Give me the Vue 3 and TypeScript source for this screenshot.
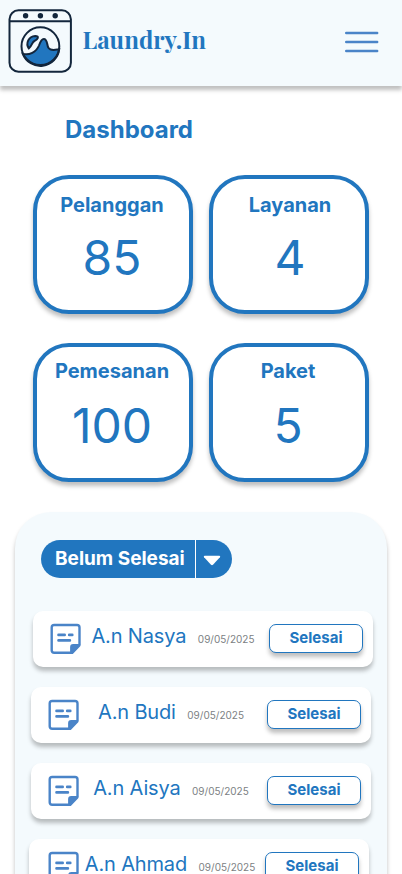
<script setup lang="ts">
interface Stat {
  label: string
  value: number
}

interface Order {
  name: string
  date: string
  indent: number
  iconGap: number
}

const stats: Stat[] = [
  { label: 'Pelanggan', value: 85 },
  { label: 'Layanan', value: 4 },
  { label: 'Pemesanan', value: 100 },
  { label: 'Paket', value: 5 },
]

const orders: Order[] = [
  { name: 'A.n Nasya', date: '09/05/2025', indent: 18, iconGap: 17 },
  { name: 'A.n Budi', date: '09/05/2025', indent: 16, iconGap: 17 },
  { name: 'A.n Aisya', date: '09/05/2025', indent: 16, iconGap: 17 },
  { name: 'A.n Ahmad', date: '09/05/2025', indent: 14, iconGap: 19 },
]
</script>

<template>
  <div class="screen">
    <header class="topbar">
      <svg class="logo" viewBox="0 0 64 64" fill="none" stroke="#13263c" stroke-width="2">
        <rect x="1.5" y="1.3" width="61.4" height="61.4" rx="9" />
        <path d="M1.5 12.3H62.7" />
        <g fill="#13263c" stroke="none">
          <circle cx="17.6" cy="6.7" r="2.7" />
          <circle cx="32.4" cy="6.7" r="2.7" />
          <circle cx="47.2" cy="6.7" r="2.7" />
        </g>
        <path
          d="M14.8 44.8C21 46.8 28.4 43 31 36.5C32.4 32.4 33.4 29.9 35.8 29.9C39.6 29.9 38.6 35.5 40.4 38.8C42.6 42.3 47 40.8 51.2 40.2A18.9 18.9 0 0 1 14.8 44.8Z"
          fill="#2176bf"
        />
        <path
          d="M20.8 39.4C17.4 34.5 20.6 27.2 27.2 26.9C31.8 27 29.8 30.6 26.4 32C23.6 33.4 24 37.2 20.8 39.4Z"
          fill="#2176bf"
        />
        <circle cx="32.4" cy="37.2" r="18.9" />
      </svg>
      <span class="brand">Laundry.In</span>
      <svg class="burger" viewBox="0 0 34 22" stroke="#4a84c8" stroke-width="2.4" stroke-linecap="round">
        <path d="M1.2 2H32.2M1.2 11H32.2M1.2 20H32.2" />
      </svg>
    </header>

    <h1 class="title">Dashboard</h1>

    <section class="stats">
      <article v-for="stat in stats" :key="stat.label" class="stat">
        <h2 class="stat-label">{{ stat.label }}</h2>
        <p class="stat-value">{{ stat.value }}</p>
      </article>
    </section>

    <section class="panel">
      <div class="filter">
        <span class="filter-text">Belum Selesai</span>
        <span class="filter-arrow">
          <svg viewBox="0 0 18 11" width="18" height="11">
            <path d="M1.6 .8H16.4Q17.8 1 16.9 2.2L10 9.8Q9 10.7 8 9.8L1.1 2.2Q.2 1 1.6 .8Z" fill="#fff" />
          </svg>
        </span>
      </div>

      <ul class="orders">
        <li
          v-for="order in orders"
          :key="order.name"
          class="order"
          :style="{ marginLeft: order.indent + 'px', paddingLeft: order.iconGap + 'px' }"
        >
          <svg class="note" viewBox="0 0 32 32" fill="none" stroke="#4a84c8" stroke-linecap="round">
            <path
              d="M21.3 29.8H4.2Q1.7 29.8 1.7 27.3V4.5Q1.7 2 4.2 2H27Q29.5 2 29.5 4.5V21.3"
              stroke-width="2.4"
            />
            <path
              d="M21 30V24.2Q21 22 23.2 22H29.6V22.6L22.4 30Z"
              fill="#4a84c8"
              stroke-width="1.8"
              stroke-linejoin="round"
            />
            <path d="M8.5 11.9H14.7M19.2 11.9H22.3M8.5 17.4H19.9" stroke-width="2.6" />
          </svg>
          <div class="order-info">
            <span class="order-name">{{ order.name }}</span>
            <span class="order-date">{{ order.date }}</span>
          </div>
          <button class="done" type="button">Selesai</button>
        </li>
      </ul>
    </section>
  </div>
</template>

<style>
body {
  margin: 0;
  overflow: hidden;
}
</style>

<style scoped>
.screen {
  width: 402px;
  height: 874px;
  overflow: hidden;
  display: flex;
  flex-direction: column;
  background: #fff;
  color: #2176bf;
  font-family: Inter, sans-serif;
}

.topbar {
  flex: none;
  box-sizing: border-box;
  height: 86px;
  display: flex;
  align-items: flex-start;
  padding: 9px 23px 0 8px;
  background: #f4fafd;
  box-shadow: 0 4px 4px rgba(0, 0, 0, 0.25);
}

.logo {
  width: 64px;
  height: 64px;
}

.brand {
  margin: 14px auto 0 10.5px;
  font: 700 24px/32px 'Playfair Display', 'Liberation Serif', serif;
}

.burger {
  width: 34px;
  height: 22px;
  margin-top: 22px;
}

.title {
  flex: none;
  margin: 29px 0 0 65px;
  font-size: 24px;
  line-height: 29px;
  font-weight: 700;
}

.stats {
  flex: none;
  display: grid;
  grid-template-columns: 160px 160px;
  grid-auto-rows: 139px;
  gap: 29px 16px;
  margin: 31px 0 0 33px;
}

.stat {
  box-sizing: border-box;
  border: 4px solid #2176bf;
  border-radius: 36px;
  padding: 14px 2px 0 0;
  background: #fff;
  text-align: center;
  box-shadow: 0 4px 4px rgba(0, 0, 0, 0.25);
}

.stat:nth-child(2) {
  padding: 14px 0 0 2px;
}

.stat:nth-child(n + 3) {
  padding-top: 12px;
}

.stat-label {
  margin: 0;
  font-size: 20px;
  line-height: 24px;
  font-weight: 700;
}

.stat-value {
  margin: 12px 0 0;
  font-size: 48px;
  line-height: 58px;
  font-weight: 400;
}

.stat:nth-child(n + 3) .stat-value {
  margin-top: 14px;
}

.panel {
  flex: none;
  box-sizing: border-box;
  width: 372px;
  height: 420px;
  margin: 30px 0 0 15px;
  padding-top: 28px;
  border-radius: 36px;
  background: #f4fafd;
  box-shadow: 0 4px 4px rgba(0, 0, 0, 0.25);
}

.filter {
  display: flex;
  width: 191px;
  height: 38px;
  margin-left: 26px;
  border-radius: 19px;
  background: #2176bf;
  color: #fff;
}

.filter-text {
  box-sizing: border-box;
  width: 154px;
  padding-left: 14px;
  font-size: 19px;
  line-height: 37px;
  font-weight: 700;
  white-space: nowrap;
}

.filter-arrow {
  flex: 1;
  display: flex;
  align-items: center;
  padding: 2px 0 0 7px;
  border-left: 1px solid #fff;
}

.orders {
  display: flex;
  flex-direction: column;
  gap: 20px;
  margin: 33px 0 0;
  padding: 0;
  list-style: none;
}

.order {
  box-sizing: border-box;
  width: 340px;
  height: 56px;
  display: flex;
  align-items: flex-start;
  padding: 13px 10px 0 0;
  border-radius: 10px;
  background: #fff;
  box-shadow: 0 4px 4px rgba(0, 0, 0, 0.25);
}

.note {
  flex: none;
  width: 32px;
  height: 32px;
  margin-top: -1px;
}

.order-info {
  flex: 1;
  min-width: 0;
  display: flex;
  justify-content: center;
  align-items: baseline;
  gap: 11.5px;
  padding-right: 5px;
  white-space: nowrap;
}

.order-name {
  font-size: 20px;
  line-height: 24px;
  font-weight: 400;
  letter-spacing: -0.15px;
}

.order-date {
  font-size: 10px;
  line-height: 12px;
  font-weight: 400;
  color: #7c7f83;
}

.done {
  flex: none;
  box-sizing: border-box;
  width: 94px;
  height: 29px;
  padding: 0 0 2px;
  border: 1px solid #2176bf;
  border-radius: 7px;
  background: #fff;
  color: #2176bf;
  font: 700 15px/18px Inter, sans-serif;
  box-shadow: 0 4px 4px rgba(0, 0, 0, 0.25);
}
</style>
